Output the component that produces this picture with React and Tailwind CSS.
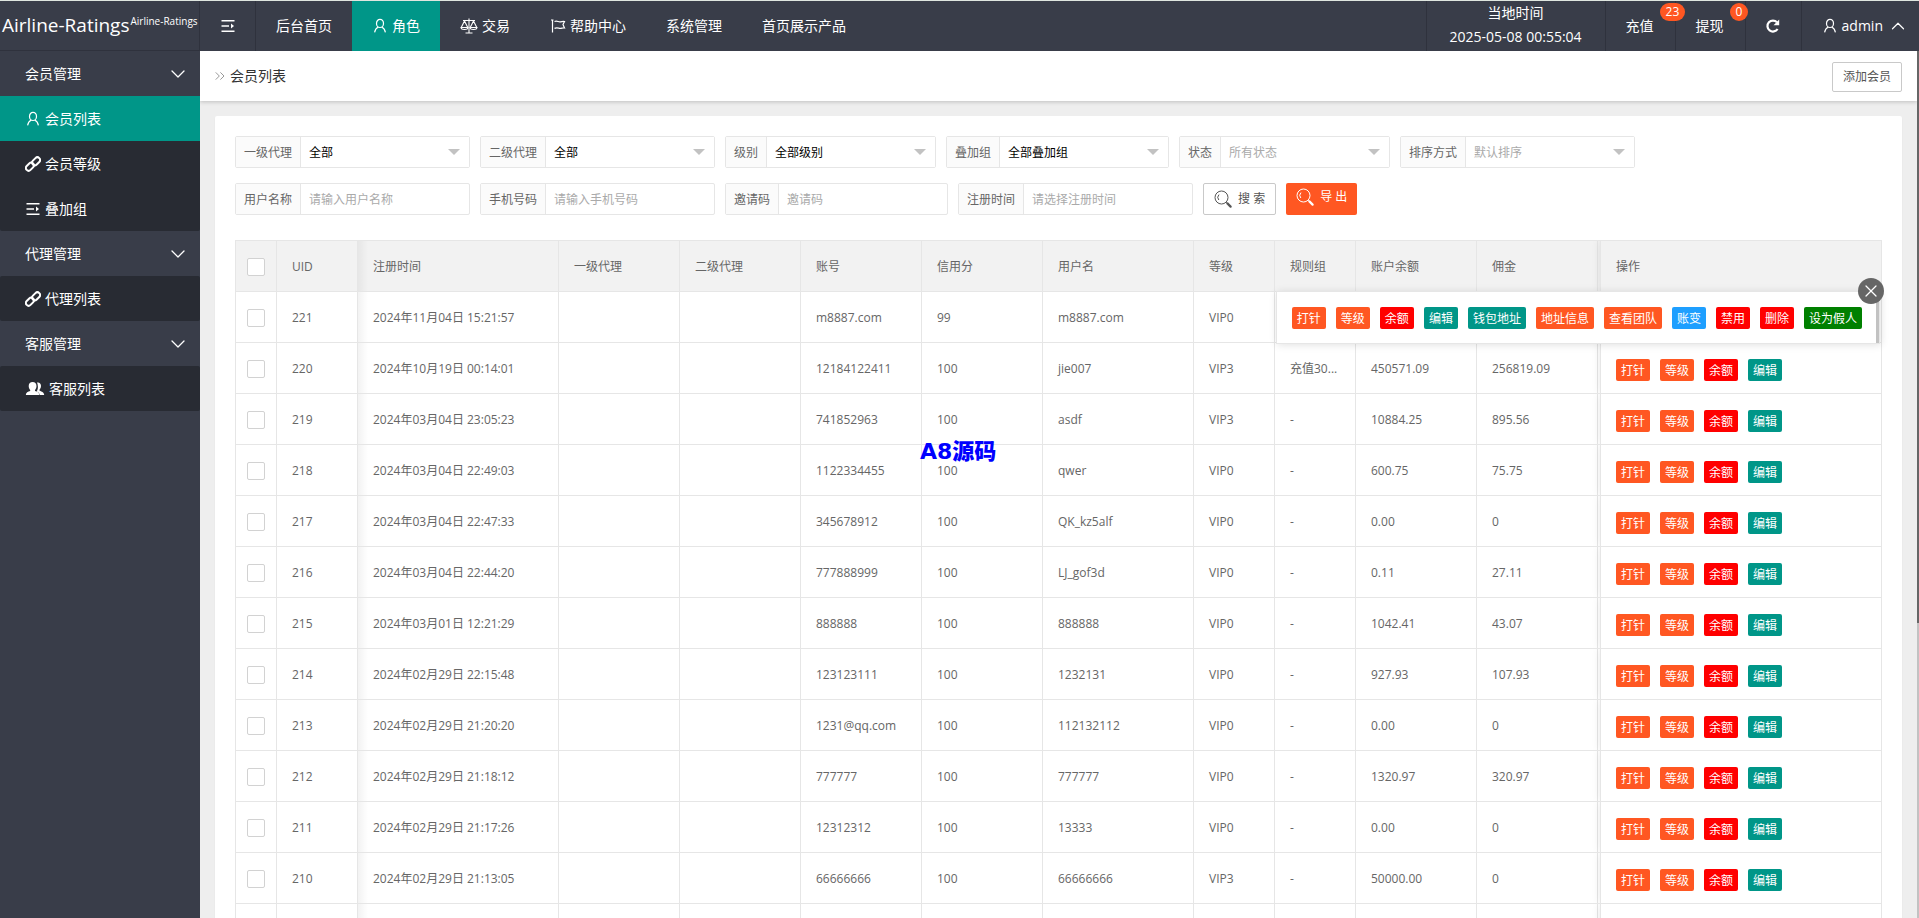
import { useState } from "react";
import { ChevronDown, ChevronUp, ChevronsRight, X } from "lucide-react";

const UserIcon = ({ className = "" }) => (
  <svg
    className={`h-4 w-4 shrink-0 ${className}`}
    viewBox="0 0 16 16"
    fill="none"
    stroke="currentColor"
    strokeWidth="1.2">
    <ellipse cx="8" cy="5.4" rx="3.5" ry="4.1" />
    <path d="M6.3 9C4.4 9.9 3 11.6 2.6 14.4M9.7 9c1.9.9 3.3 2.6 3.7 5.4" />
  </svg>
);

const ShrinkIcon = ({ className = "" }) => (
  <svg className={`h-4 w-4 shrink-0 ${className}`} viewBox="0 0 16 16" fill="currentColor">
    <path d="M1.5 2h13v1.6h-13zM1.5 7.2h7.5v1.6H1.5zM1.5 12.4h13V14h-13zM11 5.6 14 8l-3 2.4z" />
  </svg>
);

const LinkIcon = () => (
  <svg
    className="h-4 w-4 shrink-0"
    viewBox="0 0 16 16"
    fill="none"
    stroke="currentColor"
    strokeWidth="2">
    <rect x="6.6" y="2.6" width="9" height="5.4" rx="2.7" transform="rotate(-45 11.1 5.3)" />
    <rect x="0.4" y="8" width="9" height="5.4" rx="2.7" transform="rotate(-45 4.9 10.7)" />
  </svg>
);

const GroupIcon = () => (
  <svg className="h-5 w-5 shrink-0" viewBox="0 0 20 20" fill="currentColor">
    <path d="M12 3.6c2.2-.6 4 .9 4 3.2 0 1.6-.6 2.9-1.4 3.7v1.2c2.3.8 4.6 1.7 4.6 4.3h-4.4c-.3-1.9-1.7-2.9-3.2-3.6.9-1.3 1.4-2.9 1.3-4.7-.1-1.6-.4-3-.9-4.1z" />
    <path d="M7.6 3c2.3 0 3.9 1.6 3.9 4 0 1.7-.7 3.1-1.5 3.9v1.2c2.2.7 4.4 1.5 4.4 3.9H.8c0-2.4 2.2-3.2 4.4-3.9v-1.2C4.4 10.1 3.7 8.7 3.7 7c0-2.4 1.6-4 3.900-4z" />
  </svg>
);

const ScaleIcon = () => (
  <svg
    className="h-[18px] w-[18px] shrink-0"
    viewBox="0 0 18 18"
    fill="none"
    stroke="currentColor"
    strokeWidth="1.1">
    <path d="M9 1.5v14M5.5 16h7M3 3.5h12M4.5 4 1.2 10.5M4.5 4l3.3 6.5M13.5 4l-3.3 6.5M13.5 4l3.3 6.5" />
    <path d="M1 10.5h7c-.3 2.7-6.7 2.7-7 0zM10 10.5h7c-.3 2.7-6.7 2.7-7 0z" />
  </svg>
);

const FlagIcon = () => (
  <svg
    className="h-4 w-4 shrink-0"
    viewBox="0 0 16 16"
    fill="none"
    stroke="currentColor"
    strokeWidth="1.2">
    <path d="M2.5 1.5v13M1 2h2.5M4.5 3.5c2.5-1.2 4 .8 6 .3 1.3-.3 2.5-.5 4-.3l-1.5 3 1.5 3.5c-2-.3-3 .6-4.5.4-2-.3-3.5-1-5.5 0" />
  </svg>
);

const RefreshIcon = () => (
  <svg className="h-4 w-4" viewBox="0 0 16 16" fill="none" stroke="currentColor" strokeWidth="2.2">
    <path d="M12.6 11A5.5 5.5 0 1 1 12 4.3" />
    <path d="M14.2 1.5v5.7H8.5z" fill="currentColor" stroke="none" />
  </svg>
);

const SearchIcon = () => (
  <svg
    className="h-[18px] w-[18px] shrink-0"
    viewBox="0 0 18 18"
    fill="none"
    stroke="currentColor"
    strokeWidth="1">
    <circle cx="7.5" cy="7.5" r="6.5" />
    <path d="M4.8 10A4 4 0 0 1 5 4.6M12.3 12.3l1.2 1.2" />
    <path d="m13.4 13.4 3.2 3.2" strokeWidth="2.2" strokeLinecap="round" />
  </svg>
);

const navItems = [
  { label: "后台首页" },
  { label: "角色", icon: <UserIcon />, active: true },
  { label: "交易", icon: <ScaleIcon /> },
  { label: "帮助中心", icon: <FlagIcon /> },
  { label: "系统管理" },
  { label: "首页展示产品" },
];

const menu = [
  {
    title: "会员管理",
    children: [
      { label: "会员列表", icon: <UserIcon />, active: true },
      { label: "会员等级", icon: <LinkIcon /> },
      { label: "叠加组", icon: <ShrinkIcon /> },
    ],
  },
  { title: "代理管理", children: [{ label: "代理列表", icon: <LinkIcon /> }] },
  { title: "客服管理", children: [{ label: "客服列表", icon: <GroupIcon /> }] },
];

const selects = [
  { id: "agent1", label: "一级代理", value: "全部" },
  { id: "agent2", label: "二级代理", value: "全部" },
  { id: "level", label: "级别", value: "全部级别" },
  { id: "group", label: "叠加组", value: "全部叠加组" },
  { id: "status", label: "状态", value: "所有状态", muted: true },
  { id: "sort", label: "排序方式", value: "默认排序", muted: true },
];

const inputs = [
  { id: "username", label: "用户名称", placeholder: "请输入用户名称" },
  { id: "phone", label: "手机号码", placeholder: "请输入手机号码" },
  { id: "invite", label: "邀请码", placeholder: "邀请码" },
  { id: "regtime", label: "注册时间", placeholder: "请选择注册时间" },
];

const columns = [
  { title: "UID", width: "w-[81px]" },
  { title: "注册时间", width: "w-[201px]" },
  { title: "一级代理", width: "w-[121px]" },
  { title: "二级代理", width: "w-[121px]" },
  { title: "账号", width: "w-[121px]" },
  { title: "信用分", width: "w-[121px]" },
  { title: "用户名", width: "w-[151px]" },
  { title: "等级", width: "w-[81px]" },
  { title: "规则组", width: "w-[81px]" },
  { title: "账户余额", width: "w-[121px]" },
  { title: "佣金", width: "w-[121px]" },
];

const rows = [
  ["221", "2024年11月04日 15:21:57", "", "", "m8887.com", "99", "m8887.com", "VIP0", "", "", ""],
  ["220", "2024年10月19日 00:14:01", "", "", "12184122411", "100", "jie007", "VIP3", "充值30...", "450571.09", "256819.09"],
  ["219", "2024年03月04日 23:05:23", "", "", "741852963", "100", "asdf", "VIP3", "-", "10884.25", "895.56"],
  ["218", "2024年03月04日 22:49:03", "", "", "1122334455", "100", "qwer", "VIP0", "-", "600.75", "75.75"],
  ["217", "2024年03月04日 22:47:33", "", "", "345678912", "100", "QK_kz5alf", "VIP0", "-", "0.00", "0"],
  ["216", "2024年03月04日 22:44:20", "", "", "777888999", "100", "LJ_gof3d", "VIP0", "-", "0.11", "27.11"],
  ["215", "2024年03月01日 12:21:29", "", "", "888888", "100", "888888", "VIP0", "-", "1042.41", "43.07"],
  ["214", "2024年02月29日 22:15:48", "", "", "123123111", "100", "1232131", "VIP0", "-", "927.93", "107.93"],
  ["213", "2024年02月29日 21:20:20", "", "", "1231@qq.com", "100", "112132112", "VIP0", "-", "0.00", "0"],
  ["212", "2024年02月29日 21:18:12", "", "", "777777", "100", "777777", "VIP0", "-", "1320.97", "320.97"],
  ["211", "2024年02月29日 21:17:26", "", "", "12312312", "100", "13333", "VIP0", "-", "0.00", "0"],
  ["210", "2024年02月29日 21:13:05", "", "", "66666666", "100", "66666666", "VIP3", "-", "50000.00", "0"],
];

const actions = [
  { label: "打针", color: "bg-[#ff5722]" },
  { label: "等级", color: "bg-[#ff5722]" },
  { label: "余额", color: "bg-[#ff0000]" },
  { label: "编辑", color: "bg-[#009688]" },
  { label: "钱包地址", color: "bg-[#009688]" },
  { label: "地址信息", color: "bg-[#ff5722]" },
  { label: "查看团队", color: "bg-[#ff5722]" },
  { label: "账变", color: "bg-[#1e9fff]" },
  { label: "禁用", color: "bg-[#ff0000]" },
  { label: "删除", color: "bg-[#ff0000]" },
  { label: "设为假人", color: "bg-[#008000]" },
];

function ActionButtons({ items }) {
  return (
    <div className="flex gap-[10px]">
      {items.map((a) => (
        <button
          key={a.label}
          type="button"
          className={`h-[22px] shrink-0 rounded-xs px-[5px] text-xs leading-6 whitespace-nowrap text-white ${a.color}`}>
          {a.label}
        </button>
      ))}
    </div>
  );
}

function Header() {
  return (
    <header className="flex h-[51px] border-t border-[#dfe6df] bg-[#393d49] text-sm text-white">
      <a
        href="#home"
        className="flex w-[200px] shrink-0 items-center border-r border-b border-[#2f323d] pl-[2px] text-[19px] whitespace-nowrap">
        Airline-Ratings
        <sup className="ml-px text-[10px]">Airline-Ratings</sup>
      </a>
      <button
        type="button"
        aria-label="收起菜单"
        className="flex w-14 shrink-0 items-center justify-center border-r border-[#2f323d]">
        <ShrinkIcon />
      </button>
      <nav className="flex">
        {navItems.map((item) => (
          <a
            key={item.label}
            href="#nav"
            className={`flex items-center gap-1 px-5 whitespace-nowrap ${item.active ? "bg-[#009688]" : ""}`}>
            {item.icon}
            {item.label}
          </a>
        ))}
      </nav>
      <div className="ml-auto flex">
        <div className="w-[180px] border-x border-[#2f323d] text-center leading-6">
          <div>当地时间</div>
          <div>2025-05-08 00:55:04</div>
        </div>
        {[
          ["充值", "23"],
          ["提现", "0"],
        ].map(([label, count]) => (
          <a
            key={label}
            href="#wallet"
            className="relative flex w-[70px] items-center border-r border-[#2f323d] pl-5">
            {label}
            <span className="absolute top-[2px] left-[54px] rounded-full bg-[#ff5722] px-[6px] text-xs leading-[18px]">
              {count}
            </span>
          </a>
        ))}
        <button
          type="button"
          aria-label="刷新"
          className="flex w-14 items-center justify-center border-r border-[#2f323d]">
          <RefreshIcon />
        </button>
        <button type="button" className="flex items-center gap-1 pr-[10px] pl-5">
          <UserIcon />
          admin
          <ChevronUp size={22} strokeWidth={1.3} />
        </button>
      </div>
    </header>
  );
}

function Sidebar() {
  return (
    <aside className="w-[200px] shrink-0 bg-[#393d49] text-sm text-white">
      {menu.map((group) => (
        <div key={group.title}>
          <button type="button" className="flex h-[45px] w-full items-center justify-between pr-[10px] pl-[25px]">
            {group.title}
            <ChevronDown size={24} strokeWidth={1.3} />
          </button>
          <ul className="rounded-xs bg-[#282b33]">
            {group.children.map((item) => (
              <li key={item.label}>
                <a
                  href="#menu"
                  className={`flex h-[45px] items-center gap-1 pl-[25px] ${item.active ? "bg-[#009688]" : ""}`}>
                  {item.icon}
                  {item.label}
                </a>
              </li>
            ))}
          </ul>
        </div>
      ))}
    </aside>
  );
}

function Filters() {
  return (
    <form className="flex flex-col gap-[15px] text-xs text-[#666]">
      <div className="flex flex-wrap gap-[10px]">
        {selects.map((s) => (
          <div key={s.id} className="flex h-8 rounded-xs border border-[#e6e6e6]">
            <label
              htmlFor={s.id}
              className="border-r border-[#e6e6e6] bg-[#fbfbfb] px-2 leading-8 whitespace-nowrap">
              {s.label}
            </label>
            <div className="relative w-[168px]">
              <select
                id={s.id}
                className={`h-full w-full appearance-none bg-white pt-[2px] pr-6 pl-2 outline-none ${s.muted ? "text-[#aaa]" : "text-black"}`}>
                <option>{s.value}</option>
              </select>
              <span className="pointer-events-none absolute top-3 right-[9px] border-x-6 border-t-6 border-x-transparent border-t-[#c2c2c2]" />
            </div>
          </div>
        ))}
      </div>
      <div className="flex flex-wrap gap-[10px]">
        {inputs.map((f) => (
          <div key={f.id} className="flex h-8 rounded-xs border border-[#e6e6e6]">
            <label
              htmlFor={f.id}
              className="border-r border-[#e6e6e6] bg-[#fbfbfb] px-2 leading-8 whitespace-nowrap">
              {f.label}
            </label>
            <input
              id={f.id}
              type="text"
              placeholder={f.placeholder}
              className="w-[168px] px-2 pt-[2px] outline-none placeholder:text-[#aaa]"
            />
          </div>
        ))}
        <button
          type="button"
          className="flex h-8 items-center gap-[6px] rounded-xs border border-[#c9c9c9] px-[10px] text-[#555]">
          <SearchIcon />
          搜 索
        </button>
        <button
          type="button"
          className="flex h-8 items-center gap-[6px] rounded-xs bg-[#ff5722] px-[10px] pb-1 text-white">
          <SearchIcon />
          导 出
        </button>
      </div>
    </form>
  );
}

function Checkbox({ label }) {
  return (
    <input
      type="checkbox"
      aria-label={label}
      className="block h-[18px] w-[18px] appearance-none rounded-xs border border-[#d2d2d2] bg-white checked:bg-[#009688]"
    />
  );
}

function FixedCell({ className = "", children }) {
  return (
    <div
      className={`h-[50px] border-l border-[#e6e6e6] px-[15px] shadow-[-1px_0_8px_rgba(0,0,0,0.08)] [clip-path:inset(0_0_0_-10px)] ${className}`}>
      {children}
    </div>
  );
}

function UserTable() {
  const [open, setOpen] = useState(true);
  const cell = "truncate border-r border-b border-[#e6e6e6] px-[15px] pt-[2px]";
  const checkCell = "border-r border-b border-[#e6e6e6] px-[11px] pt-[2px]";
  const shade = "bg-linear-to-r from-black/5 to-transparent to-5%";

  return (
    <div className="relative mt-[25px]">
      <table className="w-full table-fixed border-separate border-spacing-0 border-t border-l border-[#e6e6e6] text-left text-xs text-[#666]">
        <thead className="bg-[#f2f2f2]">
          <tr className="h-[51px]">
            <th className={`w-[41px] ${checkCell}`}>
              <Checkbox label="全选" />
            </th>
            {columns.map((c, i) => (
              <th key={c.title} className={`${cell} ${c.width} font-normal ${i === 1 ? shade : ""}`}>
                {c.title}
              </th>
            ))}
            <th className="border-r border-b border-[#e6e6e6] pl-[2px] font-normal">
              <FixedCell className="leading-[52px]">操作</FixedCell>
            </th>
          </tr>
        </thead>
        <tbody>
          {rows.map((row, r) => (
            <tr key={row[0]} className="h-[51px]">
              <td className={checkCell}>
                <Checkbox label={row[0]} />
              </td>
              {row.map((value, i) => (
                <td key={i} className={`${cell} ${i === 1 ? shade : ""}`}>
                  {value}
                </td>
              ))}
              <td className="border-r border-b border-[#e6e6e6] pl-[2px]">
                <FixedCell className="pt-4">
                  {!(open && r === 0) && <ActionButtons items={actions.slice(0, 4)} />}
                </FixedCell>
              </td>
            </tr>
          ))}
          <tr className="h-[51px]">
            {[...columns, 0].map((_, i) => (
              <td key={i} className={`${cell} ${i === 2 ? shade : ""}`} />
            ))}
            <td className="border-r border-b border-[#e6e6e6] pl-[2px]">
              <FixedCell />
            </td>
          </tr>
        </tbody>
      </table>

      {open && (
        <div className="absolute top-[51px] right-[2px] h-[53px] border border-[#e6e6e6] bg-white pt-[15px] pr-[17px] pl-[15px] shadow-[1px_1px_8px_rgba(0,0,0,0.12)]">
          <ActionButtons items={actions} />
          <span className="absolute top-2 right-0 bottom-0 w-[3px] bg-[#c2c2c2]" />
          <button
            type="button"
            aria-label="关闭"
            onClick={() => setOpen(false)}
            className="absolute -top-[14px] -right-[5px] flex h-[26px] w-[26px] items-center justify-center rounded-full bg-[#666] text-white">
            <X size={20} strokeWidth={1.5} />
          </button>
        </div>
      )}
    </div>
  );
}

export default function App() {
  return (
    <div className="relative flex h-screen flex-col overflow-hidden bg-[#eee] font-['Open_Sans','Noto_Sans_CJK_SC',sans-serif]">
      <Header />
      <div className="flex min-h-0 flex-1">
        <Sidebar />
        <main className="min-w-0 flex-1 overflow-hidden">
          <div className="flex h-[50px] items-center justify-between bg-white pr-[15px] pl-3 text-sm text-[#333] shadow-[0_1px_4px_rgba(0,0,0,0.2)]">
            <div className="flex items-center">
              <ChevronsRight size={16} strokeWidth={1.5} className="mr-[2px] text-[#999]" />
              会员列表
            </div>
            <button
              type="button"
              className="mt-[2px] h-[30px] rounded-xs border border-[#c9c9c9] bg-white px-[10px] text-xs text-[#555]">
              添加会员
            </button>
          </div>
          <section className="m-[15px] rounded-xs bg-white p-5 shadow-[0_1px_2px_rgba(0,0,0,0.05)]">
            <Filters />
            <UserTable />
          </section>
        </main>
        <div className="w-[2px] shrink-0 bg-[#c2c2c2]">
          <div className="h-[572px] bg-[#666]" />
        </div>
      </div>
      <div className="pointer-events-none absolute top-[440px] left-[920px] font-['DejaVu_Sans','Noto_Sans_CJK_SC',sans-serif] text-[22px] leading-6 font-black text-[#0000ff]">
        A8源码
      </div>
    </div>
  );
}
